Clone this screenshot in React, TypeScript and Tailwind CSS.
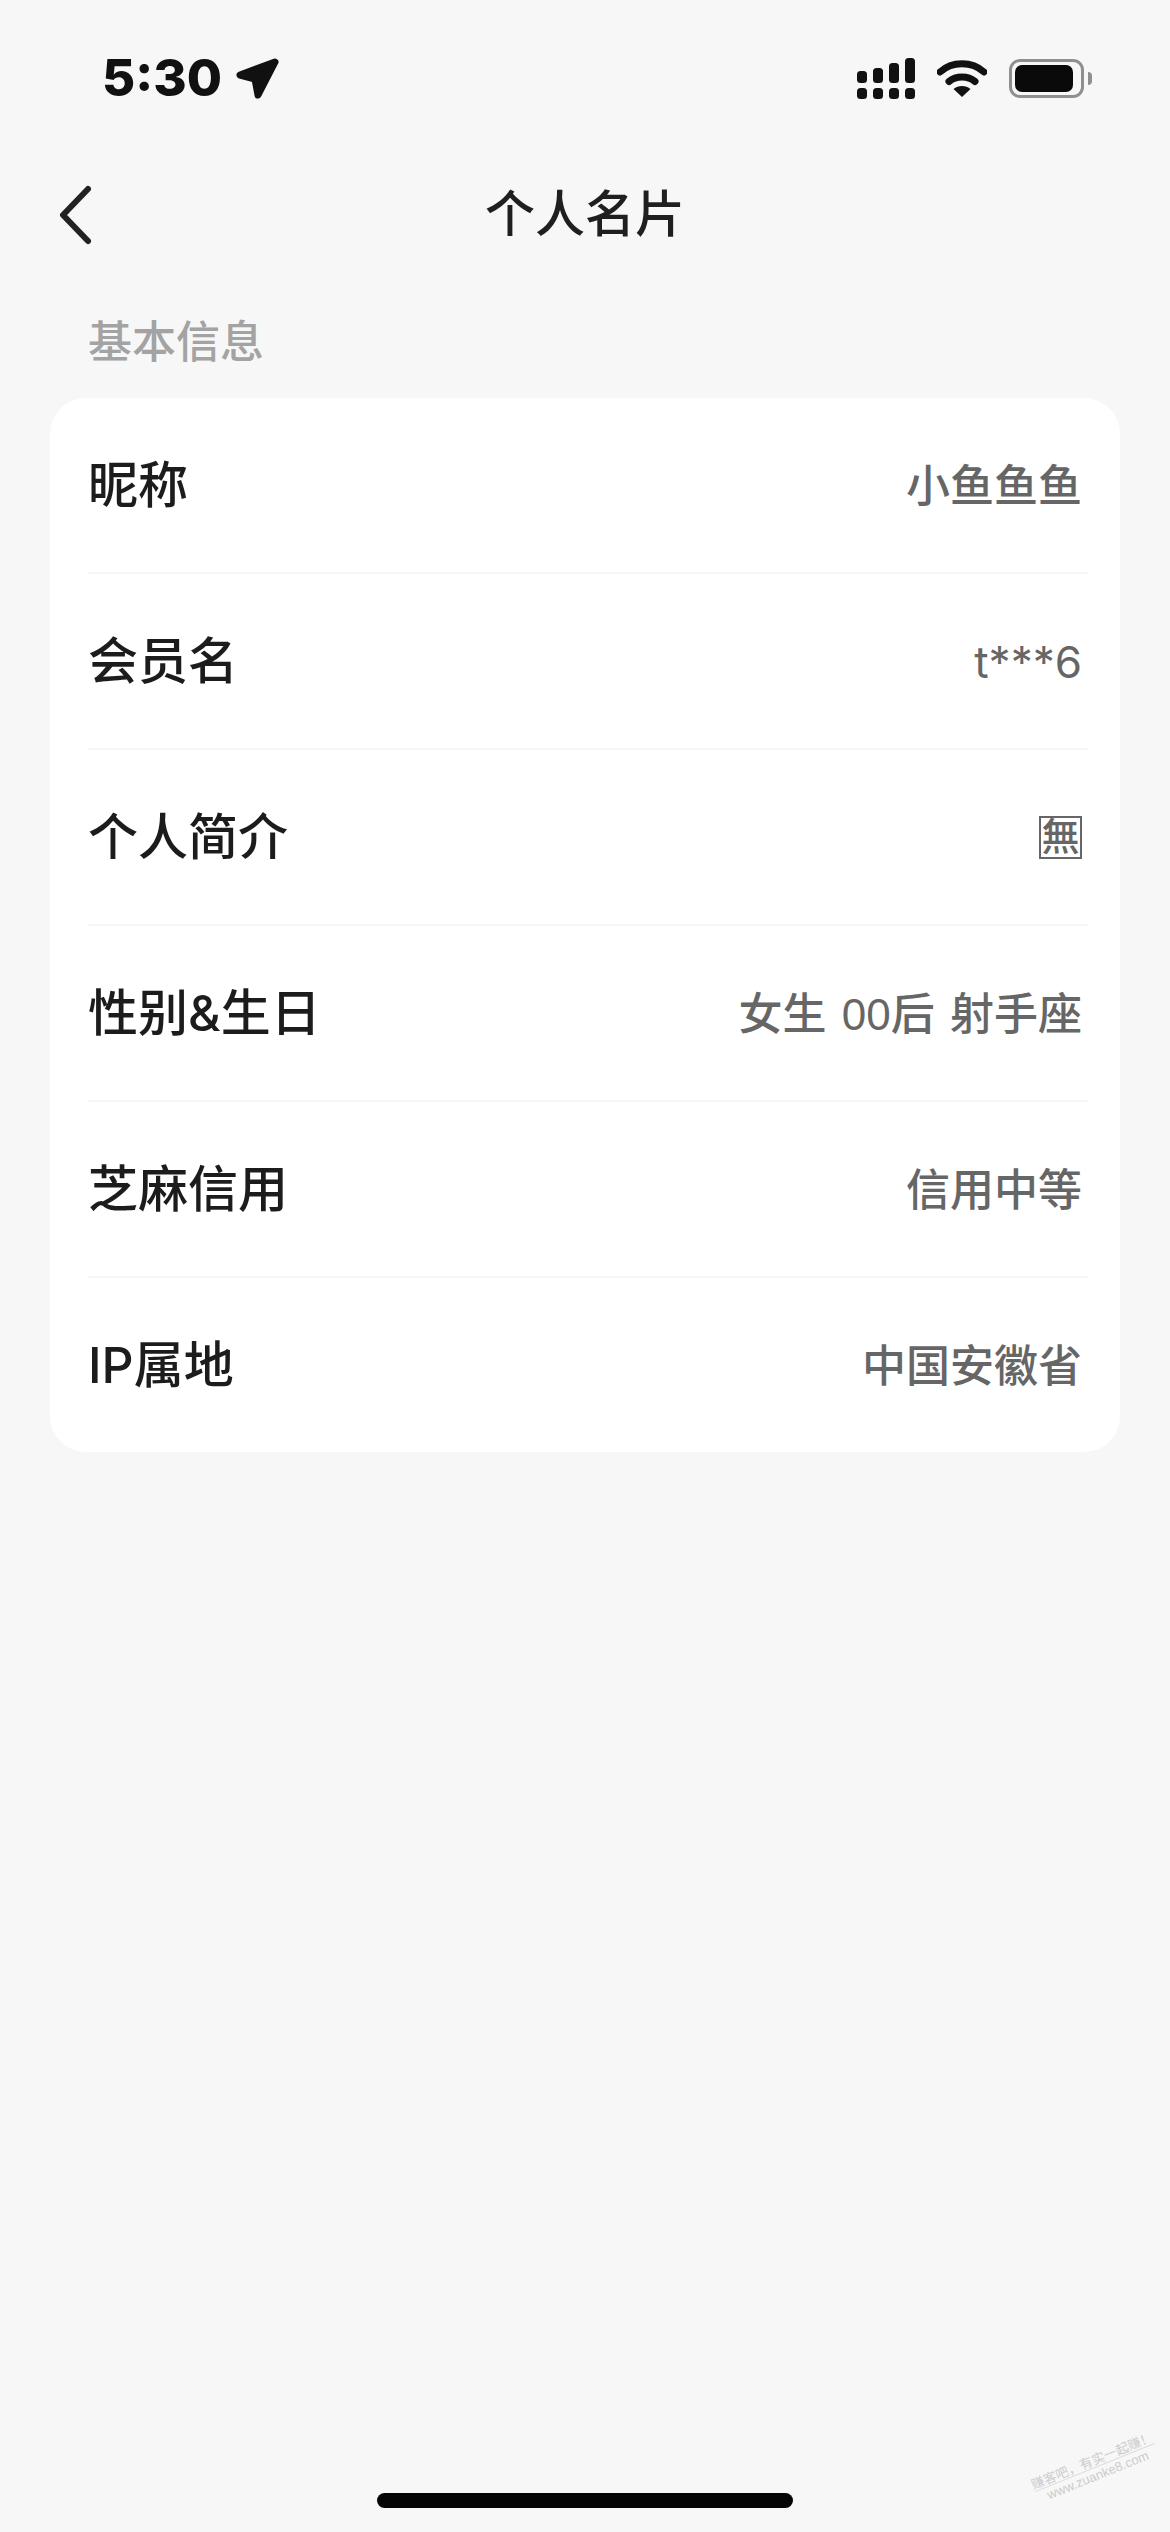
const CJK = "font-['Liberation_Sans','Noto_Sans_CJK_SC',sans-serif]";

const _ROWS = [
  { label: "昵称", value: "小鱼鱼鱼" },
  { label: "会员名", value: "t***6", latin: true },
  { label: "个人简介", value: "無", boxed: true },
  { label: "性别&生日", value: "女生 00后 射手座" },
  { label: "芝麻信用", value: "信用中等" },
  { label: "IP属地", value: "中国安徽省" },
];

function LocationIcon() {
  return (
    <svg width="46" height="43" viewBox="0 0 46 43" fill="#111" stroke="#111" strokeWidth="7" strokeLinejoin="round">
      <path d="M40 5 L5 18 L20 22 L23 38 Z" />
    </svg>
  );
}

function SignalIcon() {
  return (
    <svg width="58" height="41" viewBox="0 0 58 41" fill="#111">
      <rect x="0" y="13" width="10" height="12" rx="3.500" />
      <rect x="16" y="10" width="10" height="15" rx="3.500" />
      <rect x="32" y="5" width="10" height="20" rx="3.500" />
      <rect x="48" y="0" width="10" height="25" rx="3.500" />
      <rect x="0" y="30" width="10" height="11" rx="3.500" />
      <rect x="16" y="30" width="10" height="11" rx="3.500" />
      <rect x="32" y="30" width="10" height="11" rx="3.500" />
      <rect x="48" y="30" width="10" height="11" rx="3.500" />
    </svg>
  );
}

function WifiIcon() {
  return (
    <svg width="50" height="37" viewBox="0 0 50 37" fill="none" stroke="#111">
      <path d="M3 12 C15 1 35 1 47 12" strokeWidth="7" strokeLinecap="round" />
      <path d="M12 21.500 C19 15.500 31 15.500 38 21.500" strokeWidth="7" strokeLinecap="round" />
      <path d="M16.500 29 C21 25 29 25 33.500 29 L25 37 Z" fill="#111" stroke="none" />
    </svg>
  );
}

function BatteryIcon() {
  return (
    <div className="flex items-center gap-[4px]">
      <div className="w-[75px] h-[39px] rounded-[11px] border-[3px] border-[#8f8f8f] p-[3px] pr-[8px]">
        <div className="w-full h-full rounded-[7px] bg-[#0a0a0a]" />
      </div>
      <div className="w-[4px] h-[13px] rounded-r-full bg-[#8f8f8f]" />
    </div>
  );
}

export default function App() {
  return (
    <div className={`relative w-[1170px] h-[2532px] overflow-hidden bg-[#f7f7f7] flex flex-col ${CJK}`}>
      {/* status bar */}
      <div className="h-[156px] pl-[102px] pr-[78px] pt-[50px] flex justify-between items-start">
        <div className="flex items-center gap-[13px]">
          <span className="font-['Inter',sans-serif] font-extrabold text-[51px] leading-[56px] text-[#111]">5:30</span>
          <LocationIcon />
        </div>
        <div className="flex items-center h-[56px] gap-[22px]">
          <SignalIcon />
          <WifiIcon />
          <BatteryIcon />
        </div>
      </div>

      {/* header */}
      <div className="relative h-[118px] flex items-center justify-center">
        <svg className="absolute left-[54px] top-[27px]" width="44" height="64" viewBox="0 0 44 64" fill="none">
          <path d="M34 6 L9 32 L34 58" stroke="#222" strokeWidth="6" strokeLinecap="round" strokeLinejoin="round" />
        </svg>
        <h1 className="text-[50px] leading-[60px] text-[#1f1f1f] font-medium">个人名片</h1>
      </div>

      <div className="pl-[88px] h-[124px] pt-[37px]">
        <p className="text-[44px] leading-[64px] text-[#a3a3a3] font-medium">基本信息</p>
      </div>

      {/* card */}
      <div className="mx-[50px] h-[1054px] rounded-[36px] bg-white pl-[38px] pr-[32px] flex flex-col">
        {_ROWS.map((row, index) => (
          <div
            key={index}
            className={`flex-1 flex items-center justify-between pr-[6px] ${index < _ROWS.length - 1 ? "border-b-2 border-[#f6f6f6]" : ""}`}
          >
            <span className="font-['Inter','Noto_Sans_CJK_SC',sans-serif] text-[50px] leading-[60px] text-[#1c1c1c] font-medium">{row.label}</span>
            {row.boxed ? (
              <span className="w-[43px] h-[43px] border-2 border-[#666] text-[38px] leading-[38px] text-center text-[#666] font-medium">{row.value}</span>
            ) : row.latin ? (
              <span className="font-['Inter',sans-serif] text-[44px] leading-[60px] mt-[2px] text-[#666]">{row.value}</span>
            ) : (
              <span className="text-[44px] leading-[60px] mt-[3px] text-[#666] font-medium whitespace-pre [word-spacing:3px]">{row.value}</span>
            )}
          </div>
        ))}
      </div>

      {/* home indicator */}
      <div className="mt-auto mb-[24px] mx-auto w-[416px] h-[15px] rounded-full bg-[#050505]" />

      {/* watermark */}
      <div className="absolute left-[1030px] top-[2453px] -rotate-[22deg]">
        <p className="text-center text-[13px] leading-[15px] text-[#cccccc] whitespace-pre-line">{"赚客吧，有实一起赚！\nwww.zuanke8.com"}</p>
        <div className="absolute left-0 right-0 top-[14px] h-px bg-[#dcdcdc]" />
      </div>
    </div>
  );
}
